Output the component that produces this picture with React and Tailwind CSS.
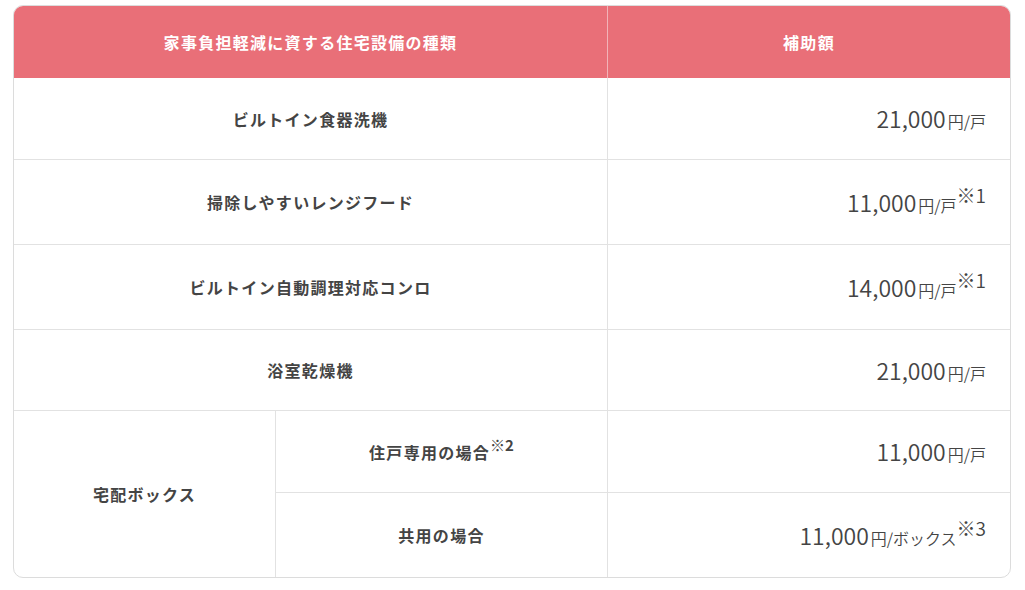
export default function App() {
  const font = { fontFamily: '"Noto Sans CJK JP", "Noto Sans", sans-serif' };
  const label = "flex items-center justify-center text-[16px] font-bold tracking-[0.08em] text-[#444]";
  const val = "flex items-center justify-end pr-[24px] text-[#444] border-b border-[#e2e2e2]";
  const Num = ({ n, unit, note }) => (
    <span className="whitespace-nowrap font-[350]">
      <span className="text-[23px]">{n}</span>
      <span className="text-[16px] ml-[2px]">{unit}</span>
      {note && <sup className="text-[19px] relative top-[-9px]">{note}</sup>}
    </span>
  );
  return (
    <div className="bg-white w-[1025px] h-[590px] pt-[5px] pl-[13px]" style={font}>
      <div className="w-[998px] border border-[#dcdcdc] rounded-[10px] overflow-hidden">
        <div className="grid grid-cols-[262px_332px_402px] grid-rows-[72px_82px_85px_85px_81px_82px_84px]">
          <div className="col-span-2 bg-[#e96f78] border-r border-[#f2b3b8] flex items-center justify-center text-white text-[16px] font-bold tracking-[0.08em]">
            家事負担軽減に資する住宅設備の種類
          </div>
          <div className="bg-[#e96f78] flex items-center justify-center text-white text-[16px] font-bold tracking-[0.08em]">
            補助額
          </div>

          <div className={`col-span-2 border-r border-b border-[#e2e2e2] ${label}`}>ビルトイン食器洗機</div>
          <div className={val}><Num n="21,000" unit="円/戸" /></div>

          <div className={`col-span-2 border-r border-b border-[#e2e2e2] ${label}`}>掃除しやすいレンジフード</div>
          <div className={val}><Num n="11,000" unit="円/戸" note="※1" /></div>

          <div className={`col-span-2 border-r border-b border-[#e2e2e2] ${label}`}>ビルトイン自動調理対応コンロ</div>
          <div className={val}><Num n="14,000" unit="円/戸" note="※1" /></div>

          <div className={`col-span-2 border-r border-b border-[#e2e2e2] ${label}`}>浴室乾燥機</div>
          <div className={val}><Num n="21,000" unit="円/戸" /></div>

          <div className={`row-span-2 border-r border-[#e2e2e2] ${label}`}>宅配ボックス</div>
          <div className={`border-r border-b border-[#e2e2e2] ${label}`}>
            <span>住戸専用の場合<sup className="text-[15px] relative top-[-8px] tracking-normal">※2</sup></span>
          </div>
          <div className={val}><Num n="11,000" unit="円/戸" /></div>

          <div className={`border-r border-[#e2e2e2] ${label}`}>共用の場合</div>
          <div className="flex items-center justify-end pr-[24px] text-[#444]"><Num n="11,000" unit="円/ボックス" note="※3" /></div>
        </div>
      </div>
    </div>
  );
}
